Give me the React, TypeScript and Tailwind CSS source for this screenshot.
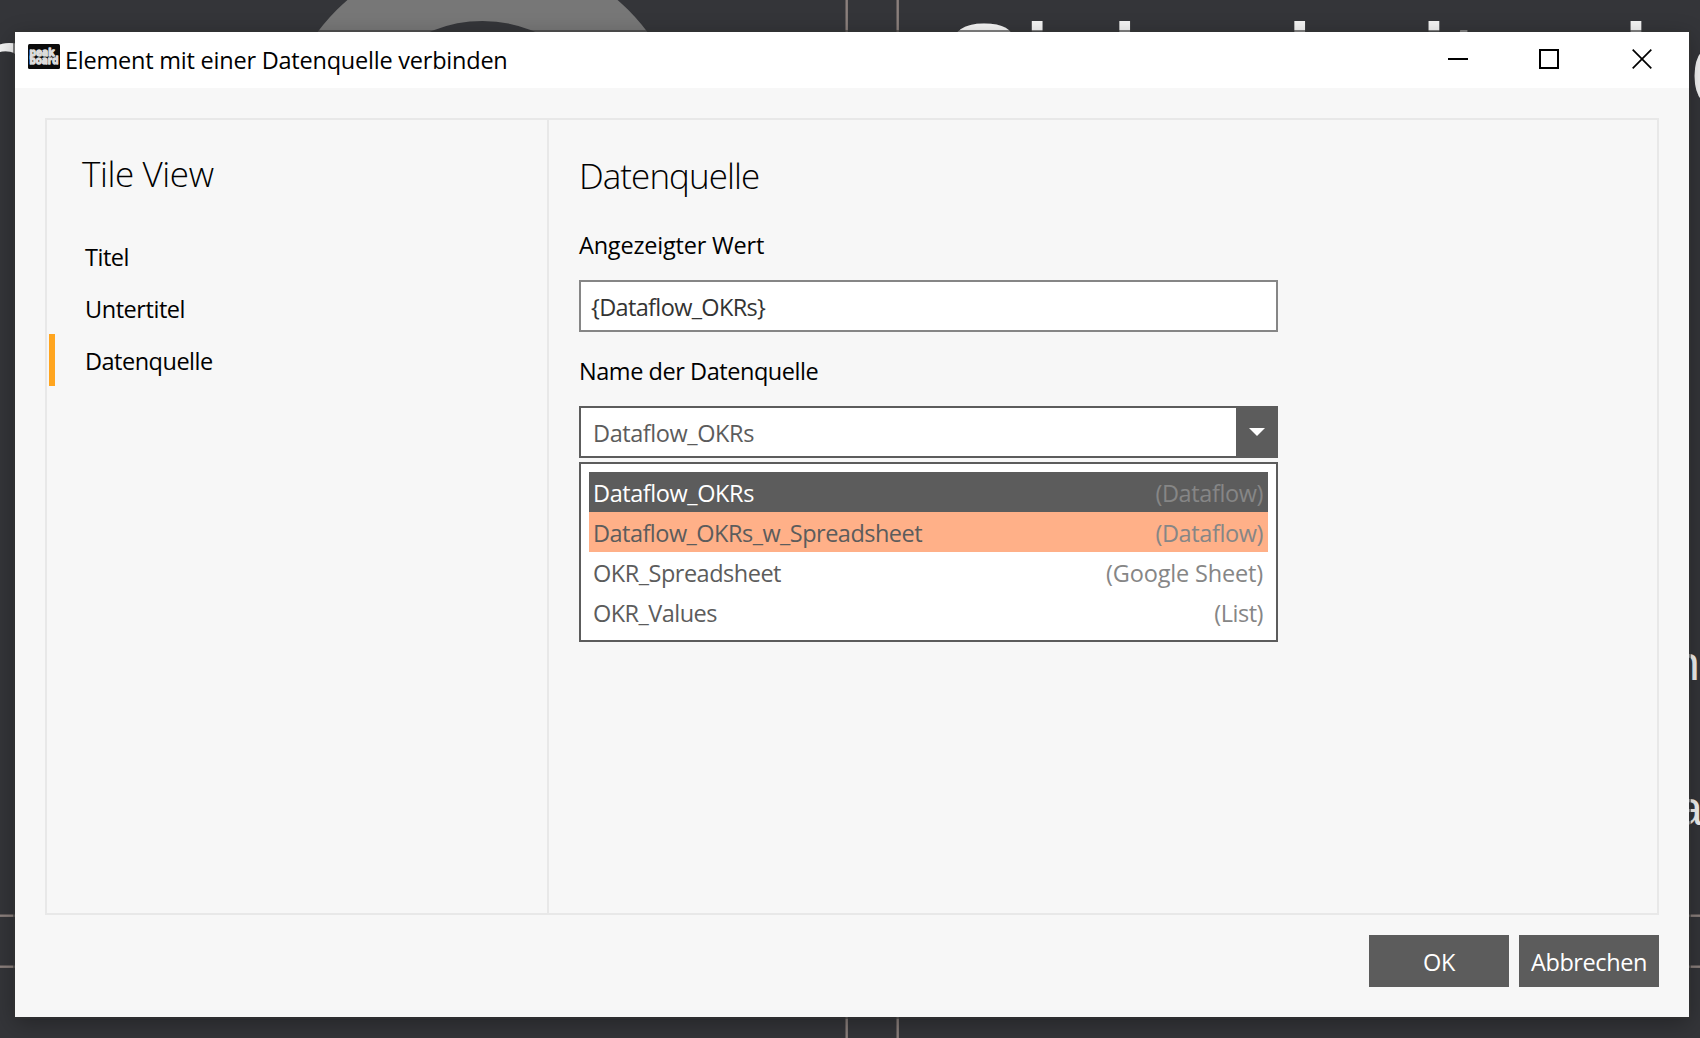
import type { ReactNode } from "react";

const navItems = [
  { label: "Titel", tracking: "tracking-[-0.5px]", active: false },
  { label: "Untertitel", tracking: "tracking-[-0.45px]", active: false },
  { label: "Datenquelle", tracking: "tracking-[-0.5px]", active: true },
];

const options = [
  { name: "Dataflow_OKRs", kind: "(Dataflow)", row: "bg-[#5c5c5c] text-white", nameTracking: "tracking-[-0.42px]", kindTracking: "tracking-[-0.4px]" },
  { name: "Dataflow_OKRs_w_Spreadsheet", kind: "(Dataflow)", row: "bg-[#ffb088] text-[#5c5c5c]", nameTracking: "tracking-[-0.52px]", kindTracking: "tracking-[-0.4px]" },
  { name: "OKR_Spreadsheet", kind: "(Google Sheet)", row: "text-[#5c5c5c]", nameTracking: "tracking-[-0.49px]", kindTracking: "tracking-[-0.17px]" },
  { name: "OKR_Values", kind: "(List)", row: "text-[#5c5c5c]", nameTracking: "tracking-[-0.54px]", kindTracking: "tracking-[-0.5px]" },
];

function Logo() {
  return (
    <svg width="32" height="25" viewBox="0 0 32 25" aria-hidden="true">
      <rect width="32" height="25" rx="1.5" fill="#0b0b0b" />
      <g
        fontFamily="Open Sans, sans-serif"
        fontWeight="700"
        fontSize="11"
        fill="#e4e4e4"
        stroke="#dcdcdc"
        strokeWidth="1.3"
        strokeLinejoin="round"
      >
        <text x="1.5" y="11.5" textLength="25" lengthAdjust="spacingAndGlyphs">peak</text>
        <text x="1.5" y="20.2" textLength="29" lengthAdjust="spacingAndGlyphs">board</text>
      </g>
    </svg>
  );
}

function Canvas() {
  return (
    <div className="absolute inset-0 font-['Liberation_Sans',sans-serif] whitespace-pre text-[#f4f4f4]">
      <svg className="absolute inset-0" width="1700" height="1038" aria-hidden="true">
        <circle cx="482.5" cy="155.5" r="170.2" fill="none" stroke="#777777" strokeWidth="71.5" />
        <g fill="#8b807d">
          <rect x="845.5" y="0" width="2.4" height="1038" />
          <rect x="896.5" y="0" width="2.4" height="1038" />
          <rect x="0" y="914.5" width="848" height="2.4" />
          <rect x="0" y="965.5" width="848" height="2.4" />
          <rect x="896" y="914.5" width="804" height="2.4" />
          <rect x="896" y="965.5" width="804" height="2.4" />
        </g>
      </svg>
      <div className="absolute left-[943px] top-[-3px] text-[121px] leading-[139px]">Sicherheit erhö</div>
      <div className="absolute left-[-30px] top-[-3px] text-[121px] leading-[139px]">n</div>
      <div className="absolute left-[1673px] top-[636px] text-[48px] leading-[55px]">n</div>
      <div className="absolute left-[1676px] top-[781px] text-[48px] leading-[55px]">a</div>
    </div>
  );
}

function DialogButton({ children }: { children: ReactNode }) {
  return (
    <button className="flex h-[52px] w-[140px] items-center justify-center bg-[#5c5c5c] pt-[3px] tracking-[-0.4px] text-white">
      {children}
    </button>
  );
}

export default function App() {
  return (
    <div className="relative h-[1038px] w-[1700px] overflow-hidden bg-[#343539] font-['Open_Sans',sans-serif] text-[23.5px] text-black">
      <Canvas />

      <div className="absolute top-8 left-[15px] flex h-[985px] w-[1674px] flex-col bg-[#f7f7f7] shadow-[0_0_0_2px_rgba(50,50,50,0.6),0_6px_22px_rgba(0,0,0,0.32)]">
        <header className="flex h-14 shrink-0 items-center bg-white pl-[13px]">
          <div className="mb-[7px] h-[25px]">
            <Logo />
          </div>
          <h1 className="ml-[5px] pt-px tracking-[-0.22px]">Element mit einer Datenquelle verbinden</h1>
          <div className="mb-[2px] ml-auto flex items-center pr-[37px]">
            <svg width="20" height="22" aria-label="Minimieren">
              <path d="M0 11h20" stroke="#000" strokeWidth="2" />
            </svg>
            <svg className="ml-[71px]" width="20" height="20" aria-label="Maximieren">
              <path d="M1 1h18v18H1z" fill="none" stroke="#000" strokeWidth="2" />
            </svg>
            <svg className="ml-[73px]" width="20" height="20" aria-label="Schließen">
              <path d="M.7 .7l18.6 18.6M19.3 .7L.7 19.3" stroke="#000" strokeWidth="1.7" />
            </svg>
          </div>
        </header>

        <main className="mx-[30px] mt-[30px] flex h-[797px] border-2 border-[#e8e8e8]">
          <nav className="w-[502px] shrink-0 border-r-2 border-[#e8e8e8] pl-0.5">
            <h2 className="mt-[30px] mb-[32px] pl-[33px] text-[35px] leading-[48px] font-light tracking-[-0.4px]">Tile View</h2>
            <ul>
              {navItems.map((item) => (
                <li
                  key={item.label}
                  className={`flex h-[52px] items-center border-l-[6px] pt-[3px] pl-[30px] ${item.tracking} ${item.active ? "border-[#ffa51f]" : "border-transparent"}`}
                >
                  {item.label}
                </li>
              ))}
            </ul>
          </nav>

          <section className="flex w-[729px] flex-col pl-[30px]">
            <h2 className="mt-[32px] text-[35px] leading-[48px] font-light tracking-[-0.95px]">Datenquelle</h2>
            <label className="mt-[29px] h-8 leading-8 tracking-[-0.2px]">Angezeigter Wert</label>
            <div className="mt-[19px] flex h-[52px] items-center border-2 border-[#868686] bg-white pt-[3px] pl-[10px] tracking-[-0.65px] text-[#333]">
              {"{Dataflow_OKRs}"}
            </div>
            <label className="mt-[23px] h-8 leading-8 tracking-[-0.45px]">Name der Datenquelle</label>
            <div className="mt-[19px] flex h-[52px] border-2 border-[#5c5c5c] bg-white">
              <div className="flex flex-1 items-center pt-[3px] pl-[12px] tracking-[-0.42px] text-[#5c5c5c]">Dataflow_OKRs</div>
              <div className="flex w-10 items-center justify-center bg-[#5c5c5c] pl-[2px]">
                <svg width="16" height="8" aria-hidden="true">
                  <path d="M0 0h16L8 8z" fill="#fff" />
                </svg>
              </div>
            </div>
            <ul className="mt-1 h-[180px] border-2 border-[#5c5c5c] bg-white px-2 pt-2">
              {options.map((o) => (
                <li key={o.name} className={`flex h-10 items-center justify-between pt-[3px] pr-[5px] pl-[4px] ${o.row}`}>
                  <span className={o.nameTracking}>{o.name}</span>
                  <span className={`text-[#868686] ${o.kindTracking}`}>{o.kind}</span>
                </li>
              ))}
            </ul>
          </section>
        </main>

        <footer className="mt-5 flex justify-end gap-[10px] pr-[30px]">
          <DialogButton>OK</DialogButton>
          <DialogButton>Abbrechen</DialogButton>
        </footer>
      </div>
    </div>
  );
}
